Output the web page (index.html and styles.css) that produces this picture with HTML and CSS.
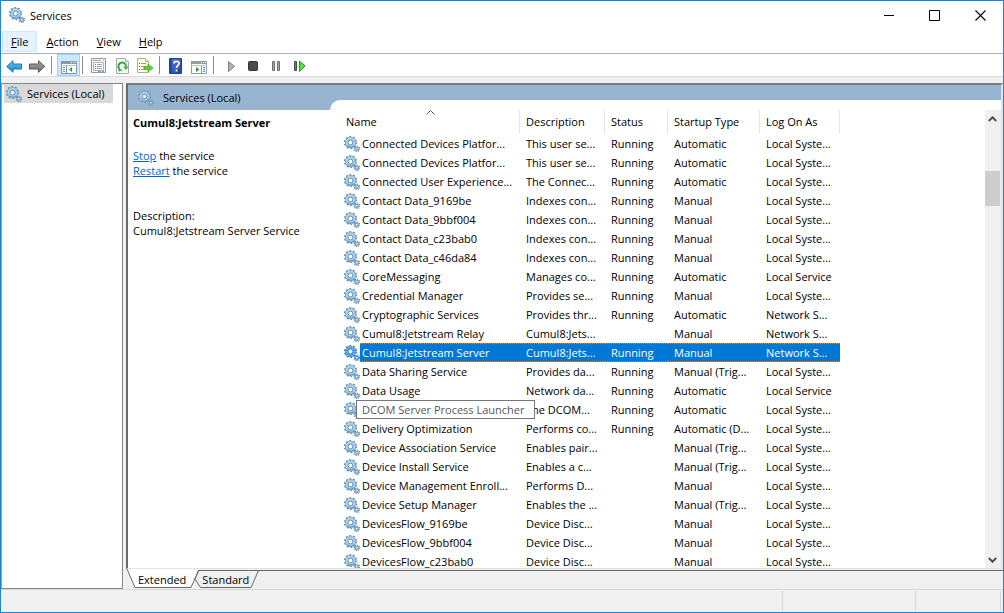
FILE: index.html
```html
<!DOCTYPE html>
<html lang="en">
<head>
<meta charset="utf-8">
<title>Services</title>
<link rel="stylesheet" href="styles.css">
</head>
<body>
<svg class="defs" aria-hidden="true">
  <defs>
    <symbol id="gear" viewBox="0 0 16 16">
      <circle cx="6.5" cy="6.5" r="5.7" fill="none" stroke="#6590b0" stroke-width="1.8" stroke-dasharray="1.790 1.790"/>
      <circle cx="6.5" cy="6.5" r="4" fill="none" stroke="#6a9cc2" stroke-width="3.200"/>
      <circle cx="6.5" cy="6.5" r="3.900" fill="none" stroke="#a9d2ee" stroke-width="2.200"/>
      <path d="M3.400 9.800A4.500 4.500 0 0 0 10.200 9.300" fill="none" stroke="#6fa3cb" stroke-width="1.4"/>
      <circle cx="6.5" cy="6.5" r="2.3" fill="#fff" stroke="#54728c" stroke-width=".7"/>
      <circle cx="12.8" cy="12.8" r="2.7" fill="none" stroke="#6a8ca6" stroke-width="1.3" stroke-dasharray="1.06 1.06"/>
      <circle cx="12.8" cy="12.8" r="1.6" fill="#fff" stroke="#7ba8c8" stroke-width="1.6"/>
    </symbol>
    <symbol id="gear-selected" viewBox="0 0 16 16">
      <circle cx="6.5" cy="6.5" r="5.7" fill="none" stroke="#2f86c8" stroke-width="1.8" stroke-dasharray="1.790 1.790"/>
      <circle cx="6.5" cy="6.5" r="4" fill="none" stroke="#2a84cf" stroke-width="3.200"/>
      <circle cx="6.5" cy="6.5" r="4" fill="none" stroke="#8cc4ee" stroke-width="2.600" stroke-dasharray="1 1"/>
      <circle cx="6.5" cy="6.5" r="2.3" fill="#fff" stroke="#2a7fc4" stroke-width=".8"/>
      <circle cx="12.8" cy="12.8" r="2.6" fill="#9ccbf0" stroke="#2a84cf" stroke-width="1.3" stroke-dasharray="1.06 1.06"/>
      <circle cx="12.8" cy="12.8" r="1.4" fill="#fff" stroke="#2a84cf"/>
    </symbol>
    <linearGradient id="blue" x1="0" y1="0" x2="0" y2="1"><stop offset="0" stop-color="#6ccaf5"/><stop offset="1" stop-color="#0b84c8"/></linearGradient>
    <linearGradient id="gray" x1="0" y1="0" x2="0" y2="1"><stop offset="0" stop-color="#a8a8a8"/><stop offset="1" stop-color="#6c6c6c"/></linearGradient>
    <linearGradient id="help-blue" x1="0" y1="0" x2="1" y2="1"><stop offset="0" stop-color="#5580dd"/><stop offset="1" stop-color="#1c3f9f"/></linearGradient>
  </defs>
</svg>
<div class="window">
  <header class="titlebar">
    <svg class="icon"><use href="#gear"/></svg>
    <h1 class="title">Services</h1>
    <button class="caption" aria-label="Minimize"><svg width="11" height="11"><path d="M1 5.5h10" stroke="#000"/></svg></button>
    <button class="caption" aria-label="Maximize"><svg width="11" height="11"><path d="M.5.5h10v10H.5z" fill="none" stroke="#000"/></svg></button>
    <button class="caption" aria-label="Close"><svg width="11" height="11"><path d="M.5.5l10 10M10.500.5l-10 10" stroke="#000" stroke-width="1.1"/></svg></button>
  </header>
  <nav class="menubar">
    <button class="menu menu-hot"><u>F</u>ile</button>
    <button class="menu"><u>A</u>ction</button>
    <button class="menu"><u>V</u>iew</button>
    <button class="menu"><u>H</u>elp</button>
  </nav>
  <div class="toolbar">
    <button class="tool" aria-label="Back"><svg class="tool-icon"><path d="M.7 9.500 7 3.700V7h8.500v5H7v3.300z" fill="url(#blue)" stroke="#1d74a8"/></svg></button>
    <button class="tool" aria-label="Forward"><svg class="tool-icon"><path d="M15.800 9.500 9.500 3.700V7h-9v5h9v3.300z" fill="url(#gray)" stroke="#5c5c5c"/></svg></button>
    <span class="sep"></span>
    <button class="tool tool-on" aria-label="Show console tree"><svg class="tool-icon"><path d="M1.500 4.500h15v12h-15z" fill="#fff" stroke="#8193a2"/><path d="M1 4h16v3H1z" fill="#8798a6"/><path d="M11 5.500h1M13 5.500h1M15 5.500h1" stroke="#fff"/><path d="M1 8.500h16" stroke="#b8c5cf"/><path d="M6.500 9v8" stroke="#8193a2"/><path d="M3 10.500h2M3 12.500h2M3 14.500h2" stroke="#5791bd"/><path d="M12 10v5l-3-2.500z" fill="#1fa51f"/></svg></button>
    <span class="sep"></span>
    <button class="tool" aria-label="Properties"><svg class="tool-icon"><path d="M.5 1.500h14v14H.5z" fill="#f4f6f8" stroke="#8d9aa5"/><path d="M2 3.500h8M12 3.500h1" stroke="#9aa9b5"/><path d="M2.500 5.500h10v8h-10z" fill="#fff" stroke="#a9b6c0"/><path d="M4 7.500h1M4 9.500h1M4 11.500h1" stroke="#3b76ba"/><path d="M6 7.500h5M6 9.500h5M6 11.500h5" stroke="#98a6b2"/><path d="M7 14.500h3M11 14.500h2" stroke="#8d9aa5"/></svg></button>
    <button class="tool" aria-label="Refresh"><svg class="tool-icon"><path d="M2.500 1.500h9l3 3v12h-12z" fill="#f8f8f8" stroke="#aaa"/><path d="M11.500 1.500v3h3" fill="#fff" stroke="#aaa"/><path d="M5.500 12A3.800 3.800 0 1 1 12 9.500" fill="none" stroke="#3aab3a" stroke-width="2"/><path d="M9 9.500h5.500L12 13z" fill="#3aab3a"/><path d="M4.500 14.500V10.500l4 3z" fill="#3aab3a"/></svg></button>
    <button class="tool" aria-label="Export list"><svg class="tool-icon"><path d="M.5 1.500h8l3 3v11H.5z" fill="#fffadf" stroke="#b7ac86"/><path d="M8.500 1.500v3h3" fill="#fff" stroke="#b7ac86"/><path d="M2 6.500h1M2 9.500h1M2 12.500h1" stroke="#555"/><path d="M4 6.500h5M4 9.500h4M4 12.500h4" stroke="#9a92bb"/><path d="M7 9.500h4V7l5 4-5 4v-2.500H7z" fill="#5ecb3d" stroke="#42a52b" stroke-width=".7"/></svg></button>
    <span class="sep"></span>
    <button class="tool" aria-label="Help"><svg class="tool-icon"><path d="M1.500 1.500h12v15h-12z" fill="url(#help-blue)" stroke="#1f4196"/><path d="M2 2h2v14H2z" fill="#2348a5"/><path d="M6 6.500C6 3.500 11 3.600 11 6.500c0 2-2.500 2-2.500 4.500M8.500 12.500v2" fill="none" stroke="#fff" stroke-width="1.800"/></svg></button>
    <button class="tool" aria-label="Show action pane"><svg class="tool-icon"><path d="M.5 4.500h15v12H.5z" fill="#fff" stroke="#929a9f"/><path d="M0 4h16v3H0z" fill="#959da2"/><path d="M10 5.500h1M12 5.500h1M14 5.500h1" stroke="#fff"/><path d="M0 8.500h16" stroke="#c3c8cb"/><path d="M10.500 9v8" stroke="#929a9f"/><path d="M12 10.500h2M12 12.500h2M12 14.500h2" stroke="#5791bd"/><path d="M5 10v5l3.500-2.500z" fill="#1fa51f"/></svg></button>
    <span class="sep"></span>
    <button class="tool" aria-label="Start"><svg class="tool-icon"><path d="M6.500 4.500v10l6-5z" fill="#b4b4b4" stroke="#7d7d7d"/></svg></button>
    <button class="tool" aria-label="Stop"><svg class="tool-icon"><rect x="3.500" y="4.500" width="9" height="9" rx="1" fill="#4b4b4b" stroke="#343434"/></svg></button>
    <button class="tool" aria-label="Pause"><svg class="tool-icon"><path d="M4.500 4.500h2v9h-2zM9.500 4.500h2v9h-2z" fill="#a5a5a5" stroke="#6e6e6e"/></svg></button>
    <button class="tool" aria-label="Restart"><svg class="tool-icon"><path d="M3.500 4.500h2v9h-2z" fill="#777" stroke="#4a4a4a"/><path d="M8.500 4v10.500L14 9z" fill="#4fe23e" stroke="#1f9f17"/></svg></button>
  </div>
  <main class="content">
    <aside class="tree">
      <div class="tree-item"><svg class="icon"><use href="#gear"/></svg><span>Services (Local)</span></div>
    </aside>
    <section class="pane">
      <div class="frame">
        <div class="details">
          <div class="banner"><svg class="icon"><use href="#gear"/></svg><span>Services (Local)</span></div>
          <div class="details-body">
            <h2 class="service-name">Cumul8:Jetstream Server</h2>
            <p class="actions"><a href="#stop">Stop</a> the service<br><a href="#restart">Restart</a> the service</p>
            <p class="description">Description:<br>Cumul8:Jetstream Server Service</p>
          </div>
        </div>
        <div class="list-area">
          <div class="list-panel">
            <div class="list-scroll">
              <table class="services">
                <colgroup><col class="c-name"><col class="c-desc"><col class="c-status"><col class="c-start"><col class="c-logon"></colgroup>
                <thead><tr><th class="sorted">Name<svg class="sort" width="9" height="5"><path d="M.5 4.500l4-4 4 4" fill="none" stroke="#5a5a5a"/></svg></th><th>Description</th><th>Status</th><th>Startup Type</th><th>Log On As</th></tr></thead>
                <tbody id="rows"></tbody>
              </table>
            </div>
            <div class="scrollbar">
              <svg width="9" height="6"><path d="M.8 5l3.700-3.700L8.200 5" fill="none" stroke="#505050" stroke-width="2"/></svg>
              <div class="track"><div class="thumb"></div></div>
              <svg width="9" height="6"><path d="M.8 1l3.700 3.700L8.200 1" fill="none" stroke="#505050" stroke-width="2"/></svg>
            </div>
          </div>
        </div>
      </div>
      <div class="tabs">
        <svg class="tab-shapes" width="136" height="20"><path d="M72.500 1.500h60L125 18.500H74.500L69 10z" fill="#f0f0f0" stroke="#696969"/><path d="M0 0h72L65 18.500H9z" fill="#fff"/><path d="M1 0l8 18.500h56L72.500 1.500" fill="none" stroke="#696969"/></svg>
        <button class="tab">Extended</button>
        <button class="tab">Standard</button>
      </div>
    </section>
  </main>
  <footer class="statusbar"><span class="part part-main"></span><span class="part part-mid"></span><span class="part part-end"></span></footer>
</div>
<script src="services.js"></script>
</body>
</html>
```

FILE: styles.css
```css
* { box-sizing: border-box; }
body { margin: 0; font: 11px/15px "Open Sans", "Noto Sans", sans-serif; color: #000; }
button { font: inherit; color: inherit; background: none; border: 0; padding: 0; margin: 0; }
h1, h2, p { margin: 0; font-size: inherit; font-weight: normal; }
.defs { position: absolute; width: 0; height: 0; }
.icon { width: 16px; height: 16px; flex: none; display: block; }

.window { height: 100vh; display: flex; flex-direction: column; border: 1px solid #1883d7; background: #f0f0f0; overflow: hidden; }
.titlebar { height: 30px; flex: none; display: flex; align-items: center; background: #fff; padding: 0 0 2px 8px; }
.title { flex: 1; padding-left: 5px; }
.caption { width: 46px; height: 28px; display: flex; align-items: center; justify-content: center; }

.menubar { height: 23px; flex: none; display: flex; background: #fff; border-bottom: 1px solid #b0b0b8; padding-left: 1px; }
.menu { height: 21px; padding: 0 9px; border-radius: 0; }
.menu-hot { background: #e5f3ff; box-shadow: inset 0 0 0 1px #cce8ff; }

.toolbar { height: 23px; flex: none; display: flex; align-items: center; background: #fff; border-bottom: 1px solid #dadada; padding-left: 2px; }
.tool { width: 23px; height: 22px; display: flex; align-items: center; justify-content: center; flex: none; }
.tool-icon { width: 17px; height: 17px; display: block; }
.tool-on { background: #cce8ff; box-shadow: inset 0 0 0 1px #99d1ff; }
.sep { width: 1px; height: 18px; margin: 0 5px 0 2px; background: #8d8d8d; flex: none; }

.content { flex: 1; min-height: 0; display: flex; gap: 3px; padding-top: 6px; }
.tree { width: 122px; flex: none; background: #fff; border: 1px solid #828790; border-left-color: #a0a0a0; padding: 0 2px; }
.tree-item { width: 109px; height: 19px; display: flex; align-items: center; gap: 5px; padding-left: 2px; background: #d9d9d9; white-space: nowrap; }

.pane { flex: 1; min-width: 0; display: flex; flex-direction: column; }
.frame { flex: 1; min-height: 0; display: flex; background: #fff; border: 2px solid #696969; border-top-color: #7c7c7c; border-right: 2px solid #e3e3e3; border-bottom: 1px solid #e3e3e3; }
.details { width: 202px; flex: none; }
.banner { height: 25px; display: flex; align-items: center; gap: 9px; padding-left: 10px; background: #99b4d1; }
.banner .icon { opacity: .8; }
.details-body { padding: 5px; white-space: nowrap; }
.service-name { font-weight: bold; padding-bottom: 18px; }
.actions a { color: #0066cc; text-decoration: underline; }
.description { padding-top: 30px; }
.list-area { flex: 1; min-width: 0; display: flex; background: #99b4d1; padding-top: 15px; }
.list-panel { flex: 1; min-width: 0; display: flex; background: #fff; border-top-left-radius: 10px; padding: 10px 0 0 9px; }
.list-scroll { flex: 1; min-width: 0; overflow: hidden; }

.services { table-layout: fixed; width: 501px; border-collapse: separate; border-spacing: 0; text-align: left; }
.c-name { width: 181px; }
.c-desc { width: 85px; }
.c-status { width: 63px; }
.c-start { width: 92px; }
.c-logon { width: 80px; }
.services th { height: 24px; font-weight: normal; padding: 0 0 2px 6px; border-right: 1px solid #e5e5e5; white-space: nowrap; position: relative; }
.services th.sorted { padding-left: 7px; }
.sort { position: absolute; left: 87px; top: 0; }
.services td { height: 19px; padding: 0 0 0 6px; white-space: nowrap; }
.services td.name { padding: 0 0 0 5px; position: relative; }
.name-box { display: flex; align-items: center; height: 19px; }
.label { flex: 1; height: 19px; line-height: 19px; padding-left: 2px; }
.selected { color: #fff; }
.selected .label, .selected td:not(.name) {
  background-color: #0078d7;
  background-image: repeating-linear-gradient(90deg, #d98840 0 1px, #0078d7 1px 2px), repeating-linear-gradient(90deg, #d98840 0 1px, #0078d7 1px 2px);
  background-size: 100% 1px;
  background-position: top, bottom;
  background-repeat: no-repeat;
}
.tooltip { position: absolute; left: 17px; top: 0; z-index: 1; width: 179px; height: 19px; line-height: 17px; padding-left: 5px; border: 1px solid #767676; background: #fff; color: #575757; }

.scrollbar { width: 16px; flex: none; display: flex; flex-direction: column; align-items: center; background: #f0f0f0; padding: 6px 1px 5px 0; }
.track { flex: 1; width: 100%; padding-top: 49px; }
.thumb { height: 35px; background: #cdcdcd; }

.tabs { height: 20px; flex: none; display: flex; position: relative; background: linear-gradient(#696969, #696969) 72px 1px / 100% 1px no-repeat; }
.tab-shapes { position: absolute; left: 0; top: 0; }
.tab { position: relative; height: 20px; padding: 0 0 0 12px; }
.tab + .tab { padding-left: 16px; }

.statusbar { height: 23px; flex: none; display: flex; border-top: 1px solid #d7d7d7; padding: 1px 2px 1px 0; }
.part { border-right: 1px solid #d7d7d7; }
.part-main { flex: 1; }
.part-mid { width: 133px; }
.part-end { width: 85px; }
```

FILE: services.js
```js
const services = [
  ["Connected Devices Platfor...", "This user se...", "Running", "Automatic", "Local Syste..."],
  ["Connected Devices Platfor...", "This user se...", "Running", "Automatic", "Local Syste..."],
  ["Connected User Experience...", "The Connec...", "Running", "Automatic", "Local Syste..."],
  ["Contact Data_9169be", "Indexes con...", "Running", "Manual", "Local Syste..."],
  ["Contact Data_9bbf004", "Indexes con...", "Running", "Manual", "Local Syste..."],
  ["Contact Data_c23bab0", "Indexes con...", "Running", "Manual", "Local Syste..."],
  ["Contact Data_c46da84", "Indexes con...", "Running", "Manual", "Local Syste..."],
  ["CoreMessaging", "Manages co...", "Running", "Automatic", "Local Service"],
  ["Credential Manager", "Provides se...", "Running", "Manual", "Local Syste..."],
  ["Cryptographic Services", "Provides thr...", "Running", "Automatic", "Network S..."],
  ["Cumul8:Jetstream Relay", "Cumul8:Jets...", "", "Manual", "Network S..."],
  ["Cumul8:Jetstream Server", "Cumul8:Jets...", "Running", "Manual", "Network S..."],
  ["Data Sharing Service", "Provides da...", "Running", "Manual (Trig...", "Local Syste..."],
  ["Data Usage", "Network da...", "Running", "Automatic", "Local Service"],
  ["DCOM Server Process Launcher", "The DCOM...", "Running", "Automatic", "Local Syste..."],
  ["Delivery Optimization", "Performs co...", "Running", "Automatic (D...", "Local Syste..."],
  ["Device Association Service", "Enables pair...", "", "Manual (Trig...", "Local Syste..."],
  ["Device Install Service", "Enables a c...", "", "Manual (Trig...", "Local Syste..."],
  ["Device Management Enroll...", "Performs D...", "", "Manual", "Local Syste..."],
  ["Device Setup Manager", "Enables the ...", "", "Manual (Trig...", "Local Syste..."],
  ["DevicesFlow_9169be", "Device Disc...", "", "Manual", "Local Syste..."],
  ["DevicesFlow_9bbf004", "Device Disc...", "", "Manual", "Local Syste..."],
  ["DevicesFlow_c23bab0", "Device Disc...", "", "Manual", "Local Syste..."]
];
const selectedIndex = 11;
const hoveredIndex = 14;

document.getElementById("rows").innerHTML = services.map(([name, ...rest], i) => {
  const selected = i === selectedIndex;
  const label = i === hoveredIndex
    ? `<span class="tooltip" role="tooltip">${name}</span>`
    : `<span class="label">${name}</span>`;
  return `<tr${selected ? ' class="selected"' : ""}><td class="name"><div class="name-box">` +
    `<svg class="icon"><use href="#gear${selected ? "-selected" : ""}"/></svg>${label}</div></td>` +
    rest.map(text => `<td>${text}</td>`).join("") + "</tr>";
}).join("");
```
